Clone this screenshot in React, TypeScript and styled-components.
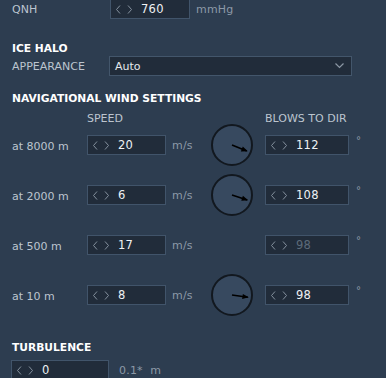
import styled, { createGlobalStyle } from "styled-components";

const GlobalStyle = createGlobalStyle`
    html, body {
        margin: 0;
        padding: 0;
        background: #2d3d50;
        overflow: hidden;
    }
    body {
        font-family: "DejaVu Sans", "Liberation Sans", sans-serif;
        font-size: 11px;
        color: #bcc5cf;
    }
`

type WindRow = {
    label: string
    speed: string
    dir: string
    dial?: number
    disabled?: boolean
}

const rows: WindRow[] = [
    {label: "at 8000 m", speed: "20", dir: "112", dial: 112},
    {label: "at 2000 m", speed: "6", dir: "108", dial: 108},
    {label: "at 500 m", speed: "17", dir: "98", disabled: true},
    {label: "at 10 m", speed: "8", dir: "98", dial: 98},
]

const Arrows = () => (
    <ArrowBox>
        <svg width="16" height="9" viewBox="0 0 16 9">
            <polyline points="4,0.5 0.5,4.5 4,8.5" fill="none" stroke="currentColor" strokeWidth="1"/>
            <polyline points="12,0.5 15.5,4.5 12,8.5" fill="none" stroke="currentColor" strokeWidth="1"/>
        </svg>
    </ArrowBox>
)

const Spin = ({value, width, disabled}: { value: string, width: number, disabled?: boolean }) => (
    <SpinBox $width={width}>
        <Arrows/>
        <SpinValue $disabled={disabled}>{value}</SpinValue>
    </SpinBox>
)

const Dial = ({deg}: { deg: number }) => {
    const rad = (deg - 90) * Math.PI / 180
    const len = 16
    const x2 = 21 + Math.cos(rad) * len
    const y2 = 21 + Math.sin(rad) * len
    const a1 = rad + Math.PI - 0.45
    const a2 = rad + Math.PI + 0.45
    return (
        <svg width="42" height="42" viewBox="0 0 42 42">
            <circle cx="21" cy="21" r="20" fill="#37495f" stroke="#12181f" strokeWidth="2"/>
            <line x1="21" y1="21" x2={x2} y2={y2} stroke="#000" strokeWidth="1.6"/>
            <polygon
                points={`${x2 + Math.cos(rad)},${y2 + Math.sin(rad)} ${x2 + Math.cos(a1) * 6},${y2 + Math.sin(a1) * 6} ${x2 + Math.cos(a2) * 6},${y2 + Math.sin(a2) * 6}`}
                fill="#000"/>
        </svg>
    )
}

export default function App() {
    return (
        <Page>
            <GlobalStyle/>
            <QnhRow>
                <Label>QNH</Label>
                <Spin value="760" width={80}/>
                <Unit>mmHg</Unit>
            </QnhRow>

            <Divider $top={14}/>
            <Heading $top={10}>ICE HALO</Heading>
            <SelectRow>
                <Label>APPEARANCE</Label>
                <Select>
                    <span>Auto</span>
                    <svg width="9" height="6" viewBox="0 0 9 6">
                        <polyline points="0.5,0.5 4.5,4.5 8.5,0.5" fill="none" stroke="#8b97a4" strokeWidth="1.2"/>
                    </svg>
                </Select>
            </SelectRow>

            <Divider $top={5}/>
            <Heading $top={11}>NAVIGATIONAL WIND SETTINGS</Heading>
            <WindSection>
                <WindHead>
                    <span/>
                    <ColHead>SPEED</ColHead>
                    <ColHead>BLOWS TO DIR</ColHead>
                </WindHead>
                {rows.map(r => (
                    <WindLine key={r.label}>
                        <RowLabel>{r.label}</RowLabel>
                        <Spin value={r.speed} width={79}/>
                        <Unit>m/s</Unit>
                        <DialCell>{r.dial !== undefined && <Dial deg={r.dial}/>}</DialCell>
                        <Spin value={r.dir} width={84} disabled={r.disabled}/>
                        <Degree>°</Degree>
                    </WindLine>
                ))}
            </WindSection>

            <Divider $top={15}/>
            <Heading $top={10}>TURBULENCE</Heading>
            <TurbRow>
                <Spin value="0" width={98}/>
                <Unit>0.1*&nbsp; m</Unit>
            </TurbRow>
        </Page>
    )
}

const Page = styled.div`
    width: 386px;
    height: 378px;
    overflow: hidden;
    display: flex;
    flex-direction: column;
`

const Label = styled.span`
    color: #bcc5cf;
    font-size: 11px;
`

const Unit = styled.span`
    color: #8c99a7;
    font-size: 11px;
    padding-left: 6px;
    letter-spacing: 0.2px;
`

const QnhRow = styled.div`
    display: grid;
    grid-template-columns: 98px 80px auto;
    align-items: center;
    height: 19px;
    margin-top: -1px;
    padding-left: 12px;
`

const Divider = styled.div<{ $top: number }>`
    height: 1px;
    margin-top: ${p => p.$top}px;
    margin-left: 12px;
    background: #1f2b39;
`

const Heading = styled.div<{ $top: number }>`
    margin-top: ${p => p.$top}px;
    padding-left: 12px;
    height: 14px;
    line-height: 14px;
    font-weight: bold;
    font-size: 10.7px;
    color: #ffffff;
`

const SelectRow = styled.div`
    display: grid;
    grid-template-columns: 97px 243px;
    align-items: center;
    margin-top: 0;
    padding-left: 12px;
`

const Select = styled.div`
    height: 20px;
    box-sizing: border-box;
    border: 1px solid #43566b;
    background: #212c3a;
    color: #e4e8ec;
    display: flex;
    align-items: center;
    justify-content: space-between;
    padding: 0 7px 0 5px;
`

const SpinBox = styled.div<{ $width: number }>`
    width: ${p => p.$width}px;
    height: 20px;
    box-sizing: border-box;
    border: 1px solid #41546a;
    background: #212c3a;
    display: flex;
    align-items: center;
    padding-left: 5px;
`

const ArrowBox = styled.span`
    color: #85919e;
    display: flex;
    width: 25px;
`

const SpinValue = styled.span<{ $disabled?: boolean }>`
    color: ${p => p.$disabled ? "#5c6a79" : "#eef1f4"};
    font-size: 11.5px;
    letter-spacing: 0.3px;
`

const WindSection = styled.div`
    display: flex;
    flex-direction: column;
    gap: 8px;
    margin-top: 2px;
    padding-left: 12px;
`

const WindHead = styled.div`
    display: grid;
    grid-template-columns: 75px 178px auto;
    height: 14px;
    padding-top: 4px;
    line-height: 14px;
    margin-bottom: -10px;
`

const ColHead = styled.span`
    color: #bcc5cf;
`

const WindLine = styled.div`
    display: grid;
    grid-template-columns: 75px 79px 45px 42px 12px 84px auto;
    height: 42px;
    align-items: center;

    & > *:nth-child(5) {
        grid-column: 6;
    }
`

const RowLabel = styled.span`
    color: #bcc5cf;
    margin-top: 2px;
`

const DialCell = styled.div`
    width: 42px;
    height: 42px;
`

const Degree = styled.span`
    color: #8c99a7;
    padding-left: 7px;
    margin-top: -10px;
    font-size: 10px;
`

const TurbRow = styled.div`
    display: flex;
    align-items: center;
    margin-top: 5px;
    padding-left: 11px;
    gap: 4px;
`
